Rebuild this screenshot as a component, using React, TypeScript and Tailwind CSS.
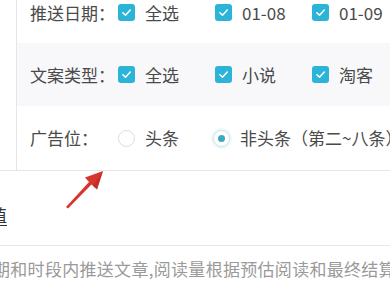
import { ReactNode } from "react";

const font = { fontFamily: '"Noto Sans CJK SC", "Noto Sans", sans-serif' };

function Checkbox() {
  return (
    <span className="flex h-[17px] w-[17px] shrink-0 items-center justify-center rounded-[3px] bg-[#2bb3d8]">
      <svg viewBox="0 0 16 16" className="h-[13px] w-[13px]">
        <path d="M3.5 8.3 L6.8 11.3 L12.6 5" fill="none" stroke="#fff" strokeWidth="1.9" strokeLinecap="round" strokeLinejoin="round" />
      </svg>
    </span>
  );
}

function Radio({ checked }: { checked?: boolean }) {
  return (
    <span
      className={`flex h-[17px] w-[17px] shrink-0 items-center justify-center rounded-full border bg-white ${
        checked ? "border-[#c9e4ea] shadow-[0_0_0_2px_#eef8fa]" : "border-[#dcdcdc]"
      }`}
    >
      {checked && <span className="h-[7px] w-[7px] rounded-full bg-[#3aa9c1]" />}
    </span>
  );
}

function Option({ control, label, wide }: { control: ReactNode; label: string; wide?: boolean }) {
  return (
    <div className={`flex shrink-0 items-center gap-[10px] ${wide ? "" : "w-[97px]"}`}>
      {control}
      <span className="whitespace-nowrap">{label}</span>
    </div>
  );
}

function Row({ label, children, className }: { label: string; children: ReactNode; className: string }) {
  return (
    <div className={`flex items-center pl-[13px] ${className}`}>
      <span className="w-[88px] shrink-0 whitespace-nowrap">{label}</span>
      {children}
    </div>
  );
}

export default function App() {
  return (
    <div className="relative h-[292px] w-[390px] overflow-hidden bg-white text-[17px] text-[#4a4a4a]" style={font}>
      <div className="ml-[16px] border-l border-[#e6e6e6]">
        <Row label="推送日期：" className="h-[43px] pb-[18px]">
          <Option control={<Checkbox />} label="全选" />
          <Option control={<Checkbox />} label="01-08" />
          <Option control={<Checkbox />} label="01-09" />
        </Row>
        <Row label="文案类型：" className="h-[63px] bg-[#f8f8fa]">
          <Option control={<Checkbox />} label="全选" />
          <Option control={<Checkbox />} label="小说" />
          <Option control={<Checkbox />} label="淘客" />
        </Row>
        <Row label="广告位：" className="h-[64px]">
          <div className="flex w-[95px] shrink-0 items-center gap-[10px]">
            <Radio />
            <span>头条</span>
          </div>
          <Option control={<Radio checked />} label="非头条（第二~八条）" wide />
        </Row>
      </div>
      <div className="h-[75px] border-t border-[#e6e6e6] pt-[31px]">
        <span className="-ml-[10px] text-[#333] underline underline-offset-[3px]">值</span>
      </div>
      <div className="border-t border-[#e8e8e8] pt-[10px]">
        <p className="-ml-[7px] whitespace-nowrap tracking-[0.3px] text-[#9a9a9a]">期和时段内推送文章,阅读量根据预估阅读和最终结算</p>
      </div>
      <svg className="absolute left-[60px] top-[165px] h-[50px] w-[50px]" viewBox="0 0 50 50">
        <polygon points="43,6 37,24.5 31.5,19.5 8,43.5 6,42 29,17 25,12.5" fill="#d6362d" />
        <polygon points="43,6 37,24.5 31.5,19.5 33,21" fill="#b92a22" opacity="0.6" />
      </svg>
    </div>
  );
}
